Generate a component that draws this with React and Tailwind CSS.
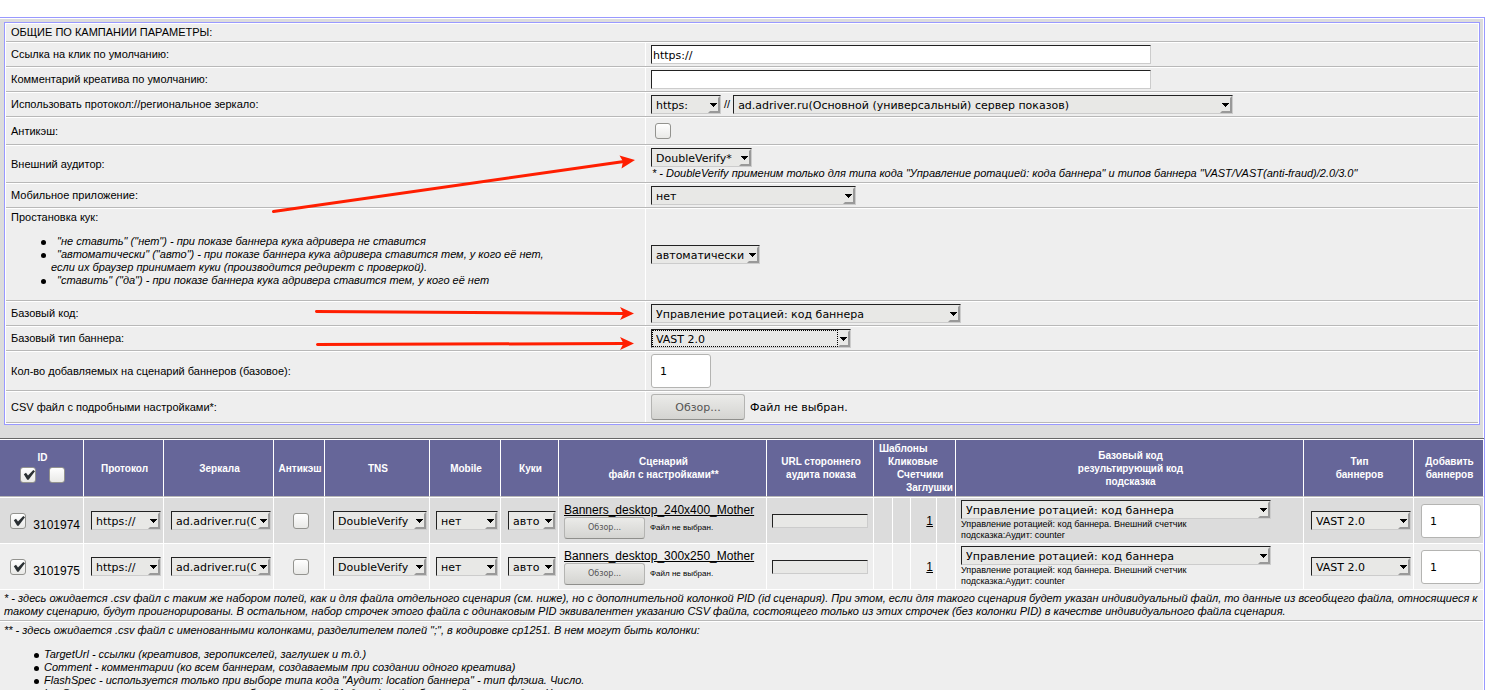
import clsx from "clsx";

const PROTOCOLS = ["https:", "http:"];

const BANNERS = [
  { id: 3101974, name: "Banners_desktop_240x400_Mother", odd: true },
  { id: 3101975, name: "Banners_desktop_300x250_Mother", odd: false },
];

const COOKIE_HINTS = [
  <>"не ставить" ("нет") - при показе баннера кука адривера не ставится</>,
  <>
    "автоматически" ("авто") - при показе баннера кука адривера ставится тем, у кого её нет,
    <br />
    <span className="-ml-1.5">если их браузер принимает куки (производится редирект с проверкой).</span>
  </>,
  <>"ставить" ("да") - при показе баннера кука адривера ставится тем, у кого её нет</>,
];

const CSV_COLUMNS = [
  "TargetUrl - ссылки (креативов, зеропикселей, заглушек и т.д.)",
  "Comment - комментарии (ко всем баннерам, создаваемым при создании одного креатива)",
  'FlashSpec - используется только при выборе типа кода "Аудит: location баннера" - тип флэша. Число.',
  'ImgSpec - используется только при выборе типа кода "Аудит: location баннера" - тип имиджа. Число.',
];

export default function App() {
  return (
    <div className="h-screen overflow-hidden bg-white pt-[17px] font-['Liberation_Sans',Arial,sans-serif] text-[11px] leading-[13px] text-black">
      <main className="mr-px min-h-full border-r border-t border-[#9999ff] bg-white pt-px">
        <div className="mr-px bg-[#dcdcdc] pb-[13px] pl-1 pr-[3px] pt-[3px]">
          <CampaignForm />
        </div>
        <div className="border-t border-[#666]">
          <BannerTable />
        </div>
        <Notes />
      </main>
    </div>
  );
}

function CampaignForm() {
  return (
    <form className="relative border border-[#9999ff] bg-white pb-px pl-px pr-px">
      <div className="border-b border-t border-b-[#b8b8b8] border-t-white bg-[#eee] px-[5px] py-0.5">
        ОБЩИЕ ПО КАМПАНИИ ПАРАМЕТРЫ:
      </div>

      <Row label="Ссылка на клик по умолчанию:" id="click">
        <TextInput id="click" value="https://" />
      </Row>
      <Row label="Комментарий креатива по умолчанию:" id="comment">
        <TextInput id="comment" />
      </Row>
      <Row label="Использовать протокол://региональное зеркало:" id="protocol">
        <div className="flex items-center gap-[3px]">
          <Select id="protocol" options={PROTOCOLS} className="w-[70px]" />
          <span>//</span>
          <Select
            label="Региональное зеркало"
            options={["ad.adriver.ru(Основной (универсальный) сервер показов)"]}
            className="w-[500px]"
          />
        </div>
      </Row>
      <Row label="Антикэш:" id="anticache">
        <div className="flex h-[22px] items-center pl-1">
          <Checkbox id="anticache" />
        </div>
      </Row>
      <Row label="Внешний аудитор:" id="auditor">
        <Select id="auditor" options={["DoubleVerify*"]} className="w-[101px]" />
        <em className="block pl-px">
          * - DoubleVerify применим только для типа кода "Управление ротацией: кода баннера" и типов баннера
          "VAST/VAST(anti-fraud)/2.0/3.0"
        </em>
      </Row>
      <Row label="Мобильное приложение:" id="mobile">
        <Select id="mobile" options={["нет"]} className="w-[205px]" />
      </Row>
      <Row
        label="Простановка кук:"
        id="cookies"
        hint={
          <ul className="my-[11px] pl-10 italic">
            {COOKIE_HINTS.map((hint, i) => (
              <Bullet key={i} className="pl-1.5">
                {hint}
              </Bullet>
            ))}
          </ul>
        }
      >
        <Select id="cookies" options={["автоматически"]} className="w-[109px]" />
      </Row>
      <Row label="Базовый код:" id="base-code">
        <Select id="base-code" options={["Управление ротацией: код баннера"]} className="w-[310px]" />
      </Row>
      <Row label="Базовый тип баннера:" id="base-type">
        <Select id="base-type" options={["VAST 2.0"]} className="w-[200px]" focused />
      </Row>
      <Row label="Кол-во добавляемых на сценарий баннеров (базовое):" id="count">
        <CountInput id="count" />
      </Row>
      <Row label="CSV файл с подробными настройками*:" id="csv">
        <div className="flex items-center gap-[5px] font-['DejaVu_Sans',sans-serif]">
          <BrowseButton id="csv" className="h-[26px] w-[94px] text-[11px]" />
          <span>Файл не выбран.</span>
        </div>
      </Row>

      <Arrows />
    </form>
  );
}

function Row({ label, id, hint, children }) {
  return (
    <div className="grid grid-cols-[640px_minmax(0,1fr)] border-b border-t border-b-[#b8b8b8] border-t-white bg-[#eee]">
      <div className="flex flex-col justify-center border-r border-white px-[5px] py-0.5">
        <label htmlFor={id}>{label}</label>
        {hint}
      </div>
      <div className="flex flex-col justify-center px-[5px] py-0.5">{children}</div>
    </div>
  );
}

function Bullet({ children, className }) {
  return (
    <li
      className={clsx(
        "relative before:absolute before:-left-2.5 before:top-[5px] before:size-[5px] before:rounded-full before:bg-black",
        className
      )}
    >
      {children}
    </li>
  );
}

function TextInput({ id, value }) {
  return (
    <input
      id={id}
      type="text"
      defaultValue={value}
      className="block h-[19px] w-[500px] border border-b-[#ccc] border-l-[#222] border-r-[#ccc] border-t-[#222] bg-white px-px pt-0.5 font-['DejaVu_Sans',sans-serif] text-[11px]"
    />
  );
}

function Select({ id, label, options, className, focused }) {
  return (
    <span className={clsx("relative block h-[19px] shrink-0", className)}>
      <select
        id={id}
        aria-label={label}
        className="block h-full w-full appearance-none overflow-hidden border border-b-[#ccc] border-l-[#222] border-r-[#ccc] border-t-[#222] bg-[#e8e8e6] pl-1 pr-3.5 pt-0.5 font-['DejaVu_Sans',sans-serif] text-[11px] text-black outline-none"
      >
        {options.map((o) => (
          <option key={o}>{o}</option>
        ))}
      </select>
      <svg
        className="pointer-events-none absolute bottom-px right-px top-px h-[17px] w-3"
        viewBox="0 0 12 17"
        aria-hidden="true"
      >
        <path d="M0 0h12v17H0z" fill="#e8e8e6" />
        <path d="M12 0v17H0l2-2h8V2z" fill="#999" />
        <path d="M2 7h7v1H8v1H7v1H6v1H5v-1H4V9H3V8H2z" fill="#000" />
      </svg>
      {focused && (
        <span className="pointer-events-none absolute bottom-px left-px right-[13px] top-px border border-dotted border-black" />
      )}
    </span>
  );
}

function Checkbox({ id, label, checked }) {
  return (
    <span className="relative inline-block size-4 align-middle">
      <input
        id={id}
        type="checkbox"
        aria-label={label}
        defaultChecked={checked}
        className="peer block size-4 appearance-none rounded-[3px] border border-[#93938f] bg-linear-to-b from-white to-[#e9e9e7]"
      />
      <svg
        className="pointer-events-none absolute left-0 top-0 hidden size-4 peer-checked:block"
        viewBox="0 0 16 16"
        aria-hidden="true"
      >
        <path d="M3.800 7.200L6 5.800l2 2.800 5.300-5.600 1.700 1.200L8.600 12.800H7.200z" fill="#2b3033" />
      </svg>
    </span>
  );
}

function CountInput({ id, label }) {
  return (
    <input
      id={id}
      type="text"
      aria-label={label}
      defaultValue="1"
      className="block h-[34px] w-[60px] rounded-[3px] border border-[#b4b4b2] bg-white px-2 pt-px font-['DejaVu_Sans',sans-serif] text-[11px]"
    />
  );
}

function BrowseButton({ id, className }) {
  return (
    <button
      id={id}
      type="button"
      className={clsx(
        "shrink-0 rounded-[3px] border border-[#b4b4b2] border-b-[#8f8f8c] bg-linear-to-b from-[#ebebe9] to-[#d4d4d1] text-[#555]",
        className
      )}
    >
      Обзор...
    </button>
  );
}

function Arrows() {
  return (
    <svg
      className="pointer-events-none absolute left-0 top-0 h-[400px] w-[640px]"
      viewBox="5 23 640 400"
      fill="#ff1e00"
      stroke="#ff1e00"
      strokeWidth="3"
      strokeLinecap="round"
      aria-hidden="true"
    >
      <path d="M273.500 211.500L624 161.500" />
      <path d="M635 160l-15.500-4.500 3.500 6-1.500 7z" stroke="none" />
      <path d="M316.500 311.500L623 313.500" />
      <path d="M634 313.500l-14-6.500 3.500 6.500-3.500 6.500z" stroke="none" />
      <path d="M317.500 344.500L623 343.500" />
      <path d="M634 343.500l-14-6.500 3.500 6.500-3.500 6.500z" stroke="none" />
    </svg>
  );
}

function Th({ children, className, colSpan }) {
  return (
    <th
      colSpan={colSpan}
      className={clsx(
        "border-b border-r border-t border-b-[#b8b8b8] border-r-white border-t-white bg-[#666699] py-0 pl-0.5 pr-0 align-middle font-bold",
        className
      )}
    >
      {children}
    </th>
  );
}

function Td({ children, className }) {
  return <td className={clsx("border-r border-t border-white p-0 align-middle", className)}>{children}</td>;
}

function BannerTable() {
  return (
    <table className="w-full table-fixed border-separate border-spacing-0">
      <colgroup>
        <col className="w-[84px]" />
        <col className="w-[80px]" />
        <col className="w-[110px]" />
        <col className="w-[51px]" />
        <col className="w-[105px]" />
        <col className="w-[71px]" />
        <col className="w-[58px]" />
        <col className="w-[208px]" />
        <col className="w-[107px]" />
        <col className="w-[19px]" />
        <col className="w-[18px]" />
        <col className="w-[26px]" />
        <col className="w-[19px]" />
        <col />
        <col className="w-[110px]" />
        <col className="w-[70px]" />
      </colgroup>
      <thead>
        <tr className="h-[58px] text-[10px] leading-[13px] text-white">
          <Th>
            ID
            <div className="mt-px flex h-5 items-center justify-center gap-[13px]">
              <Checkbox label="Выбрать все" checked />
              <Checkbox label="Снять все" />
            </div>
          </Th>
          <Th>Протокол</Th>
          <Th>Зеркала</Th>
          <Th>Антикэш</Th>
          <Th>TNS</Th>
          <Th>Mobile</Th>
          <Th>Куки</Th>
          <Th>
            Сценарий
            <br />
            файл с настройками**
          </Th>
          <Th>
            URL стороннего
            <br />
            аудита показа
          </Th>
          <Th colSpan={4} className="text-left">
            <div className="pl-[3px]">Шаблоны</div>
            <div className="pl-3">Кликовые</div>
            <div className="pl-[21px]">Счетчики</div>
            <div className="pl-[30px]">Заглушки</div>
          </Th>
          <Th>
            Базовый код
            <br />
            результирующий код
            <br />
            подсказка
          </Th>
          <Th>
            Тип
            <br />
            баннеров
          </Th>
          <Th>
            Добавить
            <br />
            баннеров
          </Th>
        </tr>
      </thead>
      <tbody>
        {BANNERS.map((b) => (
          <BannerRow key={b.id} b={b} />
        ))}
      </tbody>
    </table>
  );
}

function BannerRow({ b }) {
  return (
    <tr className={clsx("h-[46px]", b.odd ? "bg-[#dcdcdc]" : "bg-[#eee]")}>
      <Td>
        <label className="flex items-center justify-between pl-2.5 pr-[3px] text-xs">
          <Checkbox checked />
          <span className="pt-2">{b.id}</span>
        </label>
      </Td>
      <Td className="pl-[7px]">
        <Select label="Протокол" options={["https://", "http://"]} className="w-[70px]" />
      </Td>
      <Td className="pl-[7px]">
        <Select
          label="Зеркала"
          options={["ad.adriver.ru(Основной (универсальный) сервер показов)"]}
          className="w-[100px]"
        />
      </Td>
      <Td className="pl-1 text-center">
        <Checkbox label="Антикэш" />
      </Td>
      <Td className="pl-2">
        <Select label="TNS" options={["DoubleVerify"]} className="w-[94px]" />
      </Td>
      <Td className="pl-1.5">
        <Select label="Mobile" options={["нет"]} className="w-[62px]" />
      </Td>
      <Td className="pl-[7px]">
        <Select label="Куки" options={["авто"]} className="w-[48px]" />
      </Td>
      <Td className="pl-[5px]">
        <a href="#" className="block whitespace-nowrap text-xs leading-[14px] underline">
          {b.name}
        </a>
        <div className="flex items-center gap-[5px] text-[8px]">
          <BrowseButton className="h-[22px] w-[81px] font-['DejaVu_Sans',sans-serif] text-[8px]" />
          <span>Файл не выбран.</span>
        </div>
      </Td>
      <Td className="pl-[5px]">
        <input
          type="text"
          aria-label="URL стороннего аудита показа"
          className="block h-[14px] w-[96px] border border-b-[#ccc] border-l-[#222] border-r-[#ccc] border-t-[#222] bg-[#e8e8e6]"
        />
      </Td>
      <Td />
      <Td />
      <Td className="pr-[3px] text-right">
        <a href="#" className="text-xs underline">
          1
        </a>
      </Td>
      <Td />
      <Td className="pl-[5px]">
        <Select label="Базовый код" options={["Управление ротацией: код баннера"]} className="w-[310px]" />
        <div className="text-[9px] leading-[11px]">
          Управление ротацией: код баннера. Внешний счетчик
          <br />
          подсказка:Аудит: counter
        </div>
      </Td>
      <Td className="pl-[7px]">
        <Select label="Тип баннеров" options={["VAST 2.0"]} className="w-[100px]" />
      </Td>
      <Td className="pl-[7px]">
        <CountInput label="Добавить баннеров" />
      </Td>
    </tr>
  );
}

function Notes() {
  return (
    <section className="mr-px italic">
      <p className="border-b border-t border-b-[#b8b8b8] border-t-white bg-[#eee] px-1 py-0.5">
        * - здесь ожидается .csv файл с таким же набором полей, как и для файла отдельного сценария (см. ниже), но с
        дополнительной колонкой PID (id сценария). При этом, если для такого сценария будет указан индивидуальный файл,
        то данные из всеобщего файла, относящиеся к такому сценарию, будут проигнорированы. В остальном, набор строчек
        этого файла с одинаковым PID эквивалентен указанию CSV файла, состоящего только из этих строчек (без колонки
        PID) в качестве индивидуального файла сценария.
      </p>
      <div className="border-t border-white bg-[#eee] px-1 py-0.5">
        <p>
          ** - здесь ожидается .csv файл с именованными колонками, разделителем полей ";", в кодировке cp1251. В нем
          могут быть колонки:
        </p>
        <ul className="my-[11px] pl-10">
          {CSV_COLUMNS.map((text) => (
            <Bullet key={text}>{text}</Bullet>
          ))}
        </ul>
      </div>
    </section>
  );
}
